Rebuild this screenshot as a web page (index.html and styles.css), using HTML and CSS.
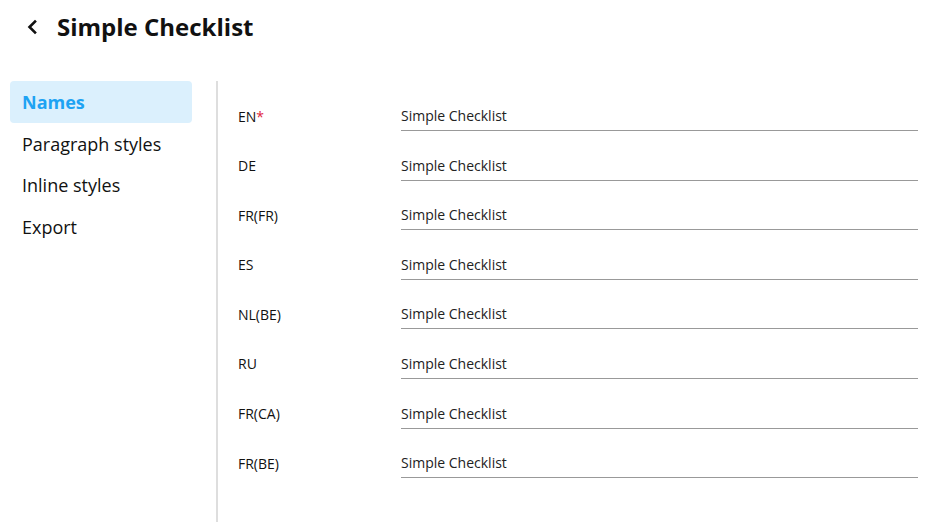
FILE: index.html
```html
<!DOCTYPE html>
<html lang="en">
<head>
<meta charset="utf-8">
<title>Simple Checklist</title>
<link rel="stylesheet" href="styles.css">
</head>
<body>
<header class="header">
  <button class="back" aria-label="Back">
    <svg width="12" height="16" viewBox="0 0 12 16"><path d="M9 2.5 L3.5 8 L9 13.5" fill="none" stroke="#111" stroke-width="2.6" stroke-linecap="square"/></svg>
  </button>
  <h1 class="title">Simple Checklist</h1>
</header>
<div class="main">
  <nav class="sidebar">
    <a class="nav-item active">Names</a>
    <a class="nav-item">Paragraph styles</a>
    <a class="nav-item">Inline styles</a>
    <a class="nav-item">Export</a>
  </nav>
  <section class="content">
    <div class="row"><label class="lang">EN<span class="req">*</span></label><input class="field" value="Simple Checklist"></div>
    <div class="row"><label class="lang">DE</label><input class="field" value="Simple Checklist"></div>
    <div class="row"><label class="lang">FR(FR)</label><input class="field" value="Simple Checklist"></div>
    <div class="row"><label class="lang">ES</label><input class="field" value="Simple Checklist"></div>
    <div class="row"><label class="lang">NL(BE)</label><input class="field" value="Simple Checklist"></div>
    <div class="row"><label class="lang">RU</label><input class="field" value="Simple Checklist"></div>
    <div class="row"><label class="lang">FR(CA)</label><input class="field" value="Simple Checklist"></div>
    <div class="row"><label class="lang">FR(BE)</label><input class="field" value="Simple Checklist"></div>
  </section>
</div>
</body>
</html>
```
FILE: styles.css
```css
* { box-sizing: border-box; }
html, body { margin: 0; padding: 0; height: 100%; background: #fff; }
body {
  font-family: "Open Sans", "Noto Sans", sans-serif;
  color: #111;
  display: flex;
  flex-direction: column;
  overflow: hidden;
}
.header {
  display: flex;
  align-items: center;
  height: 53px;
  padding-left: 26px;
}
.back {
  border: none;
  background: none;
  padding: 0;
  width: 14px;
  height: 20px;
  display: flex;
  align-items: center;
  cursor: pointer;
}
.title {
  margin: 0 0 0 17px;
  font-size: 24px;
  font-weight: 700;
  color: #111;
  letter-spacing: 0;
}
.main {
  display: flex;
  flex: 1;
  margin-top: 28px;
}
.sidebar {
  width: 216px;
  padding: 0 24px 0 10px;
  display: flex;
  flex-direction: column;
}
.nav-item {
  height: 41.7px;
  display: flex;
  align-items: center;
  padding-left: 12px;
  font-size: 18px;
  color: #111;
  border-radius: 4px;
}
.nav-item.active {
  background: #dbf0fd;
  color: #1ea3f3;
  font-weight: 700;
}
.content {
  border-left: 2px solid #dedede;
  padding: 20px 28px 0 20px;
  display: flex;
  flex-direction: column;
  gap: 19.6px;
  flex: 1;
}
.row {
  display: flex;
  align-items: center;
}
.lang {
  width: 163px;
  font-size: 14px;
  color: #111;
}
.req { color: #e0243c; }
.field {
  flex: 1;
  height: 30px;
  border: none;
  border-bottom: 1px solid #999;
  padding: 0;
  font-family: "Open Sans", "Noto Sans", sans-serif;
  font-size: 14px;
  color: #222;
  background: transparent;
  outline: none;
}
```
